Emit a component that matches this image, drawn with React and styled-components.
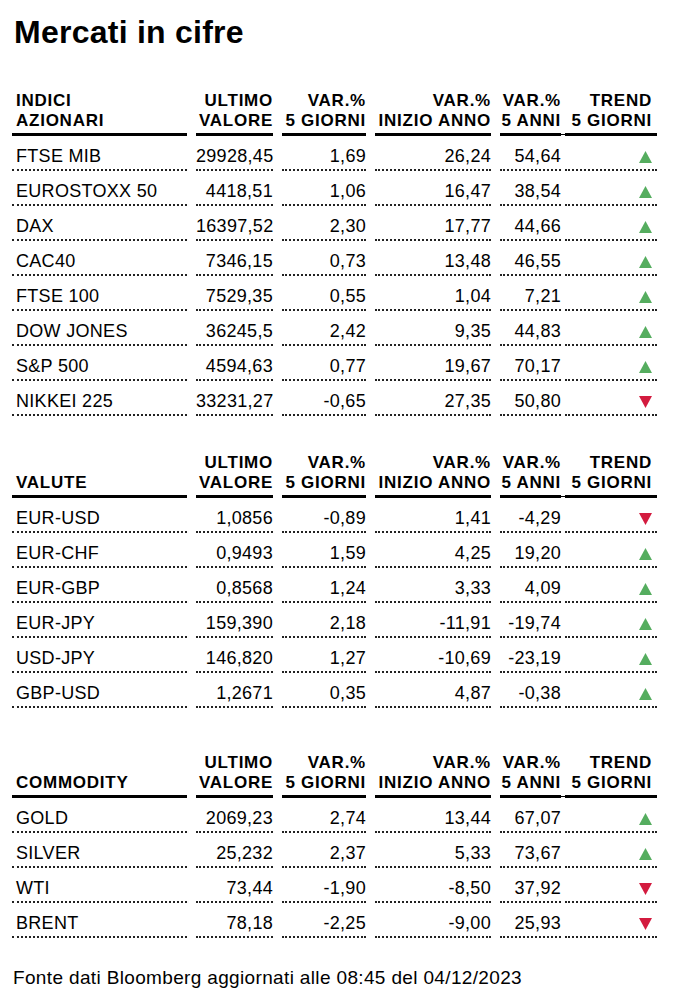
import React from "react";
import styled, { createGlobalStyle } from "styled-components";

const GlobalStyle = createGlobalStyle`
  body {
    margin: 8px;
    background: #fff;
    color: #000;
    font-family: "Liberation Sans", Arial, sans-serif;
  }
`;

const sections = [
  {
    title: ["INDICI", "AZIONARI"],
    gap: 37,
    rows: [
      ["FTSE MIB", "29928,45", "1,69", "26,24", "54,64", "up"],
      ["EUROSTOXX 50", "4418,51", "1,06", "16,47", "38,54", "up"],
      ["DAX", "16397,52", "2,30", "17,77", "44,66", "up"],
      ["CAC40", "7346,15", "0,73", "13,48", "46,55", "up"],
      ["FTSE 100", "7529,35", "0,55", "1,04", "7,21", "up"],
      ["DOW JONES", "36245,5", "2,42", "9,35", "44,83", "up"],
      ["S&P 500", "4594,63", "0,77", "19,67", "70,17", "up"],
      ["NIKKEI 225", "33231,27", "-0,65", "27,35", "50,80", "down"],
    ],
  },
  {
    title: ["", "VALUTE"],
    gap: 45,
    rows: [
      ["EUR-USD", "1,0856", "-0,89", "1,41", "-4,29", "down"],
      ["EUR-CHF", "0,9493", "1,59", "4,25", "19,20", "up"],
      ["EUR-GBP", "0,8568", "1,24", "3,33", "4,09", "up"],
      ["EUR-JPY", "159,390", "2,18", "-11,91", "-19,74", "up"],
      ["USD-JPY", "146,820", "1,27", "-10,69", "-23,19", "up"],
      ["GBP-USD", "1,2671", "0,35", "4,87", "-0,38", "up"],
    ],
  },
  {
    title: ["", "COMMODITY"],
    gap: 0,
    rows: [
      ["GOLD", "2069,23", "2,74", "13,44", "67,07", "up"],
      ["SILVER", "25,232", "2,37", "5,33", "73,67", "up"],
      ["WTI", "73,44", "-1,90", "-8,50", "37,92", "down"],
      ["BRENT", "78,18", "-2,25", "-9,00", "25,93", "down"],
    ],
  },
];

const heads = [
  ["ULTIMO", "VALORE"],
  ["VAR.%", "5 GIORNI"],
  ["VAR.%", "INIZIO ANNO"],
  ["VAR.%", "5 ANNI"],
  ["TREND", "5 GIORNI"],
];

const Page = styled.div`
  padding: 6px 0 0 4px;
`;

const Title = styled.h1`
  margin: 0 0 40px 2px;
  font-size: 32px;
  line-height: 37px;
  font-weight: bold;
  letter-spacing: 0.25px;
`;

const Grid = styled.div`
  display: grid;
  grid-template-columns: 175px 77px 84px 116px 61px 87px;
  column-gap: 9px;
  align-items: end;
  margin-bottom: ${(p) => p.$gap}px;
`;

const HeadCell = styled.div`
  font-size: 17px;
  font-weight: bold;
  letter-spacing: 0.75px;
  line-height: 20px;
  text-align: ${(p) => (p.$first ? "left" : "right")};
  padding: 0 ${(p) => (p.$last ? "5px" : "0")} 2px ${(p) => (p.$first ? "4px" : "0")};
  margin-left: ${(p) => (p.$last ? "-5px" : "0")};
  border-bottom: 3px solid #000;
  white-space: nowrap;
  position: relative;

  ${(p) =>
    p.$joined &&
    `
    &::after {
      content: "";
      position: absolute;
      right: -4px;
      bottom: -2px;
      width: 4px;
      height: 1px;
      background: #000;
    }
  `}
`;

const Cell = styled.div`
  font-size: 18px;
  line-height: 22px;
  height: 22px;
  letter-spacing: 0.3px;
  text-align: ${(p) => (p.$first ? "left" : "right")};
  padding: 9px ${(p) => (p.$last ? "5px" : "0")} 2px ${(p) => (p.$first ? "4px" : "0")};
  margin-left: ${(p) => (p.$last ? "-5px" : "0")};
  border-bottom: 2px dotted #222;
  white-space: nowrap;
`;

const Trend = styled.svg`
  width: 13px;
  height: 12px;
  vertical-align: -1px;
`;

const Footer = styled.p`
  margin: 29px 0 0 1px;
  font-size: 19px;
  line-height: 22px;
  letter-spacing: 0.35px;
`;

function Arrow({ dir }) {
  return dir === "up" ? (
    <Trend viewBox="0 0 13 12">
      <polygon points="6.5,0 13,12 0,12" fill="#55ad5f" />
    </Trend>
  ) : (
    <Trend viewBox="0 0 13 12">
      <polygon points="0,0 13,0 6.5,12" fill="#d31b3f" />
    </Trend>
  );
}

function Section({ title, rows, gap }) {
  return (
    <Grid $gap={gap}>
      <HeadCell $first>
        {title[0] && <div>{title[0]}</div>}
        <div>{title[1]}</div>
      </HeadCell>
      {heads.map((h, i) => (
        <HeadCell key={i} $last={i === 4} $joined={i === 3}>
          <div>{h[0]}</div>
          <div>{h[1]}</div>
        </HeadCell>
      ))}
      {rows.map((r) => (
        <React.Fragment key={r[0]}>
          <Cell $first>{r[0]}</Cell>
          <Cell>{r[1]}</Cell>
          <Cell>{r[2]}</Cell>
          <Cell>{r[3]}</Cell>
          <Cell>{r[4]}</Cell>
          <Cell $last>
            <Arrow dir={r[5]} />
          </Cell>
        </React.Fragment>
      ))}
    </Grid>
  );
}

export default function App() {
  return (
    <Page>
      <GlobalStyle />
      <Title>Mercati in cifre</Title>
      {sections.map((s) => (
        <Section key={s.title[1]} title={s.title} rows={s.rows} gap={s.gap} />
      ))}
      <Footer>Fonte dati Bloomberg aggiornati alle 08:45 del 04/12/2023</Footer>
    </Page>
  );
}
